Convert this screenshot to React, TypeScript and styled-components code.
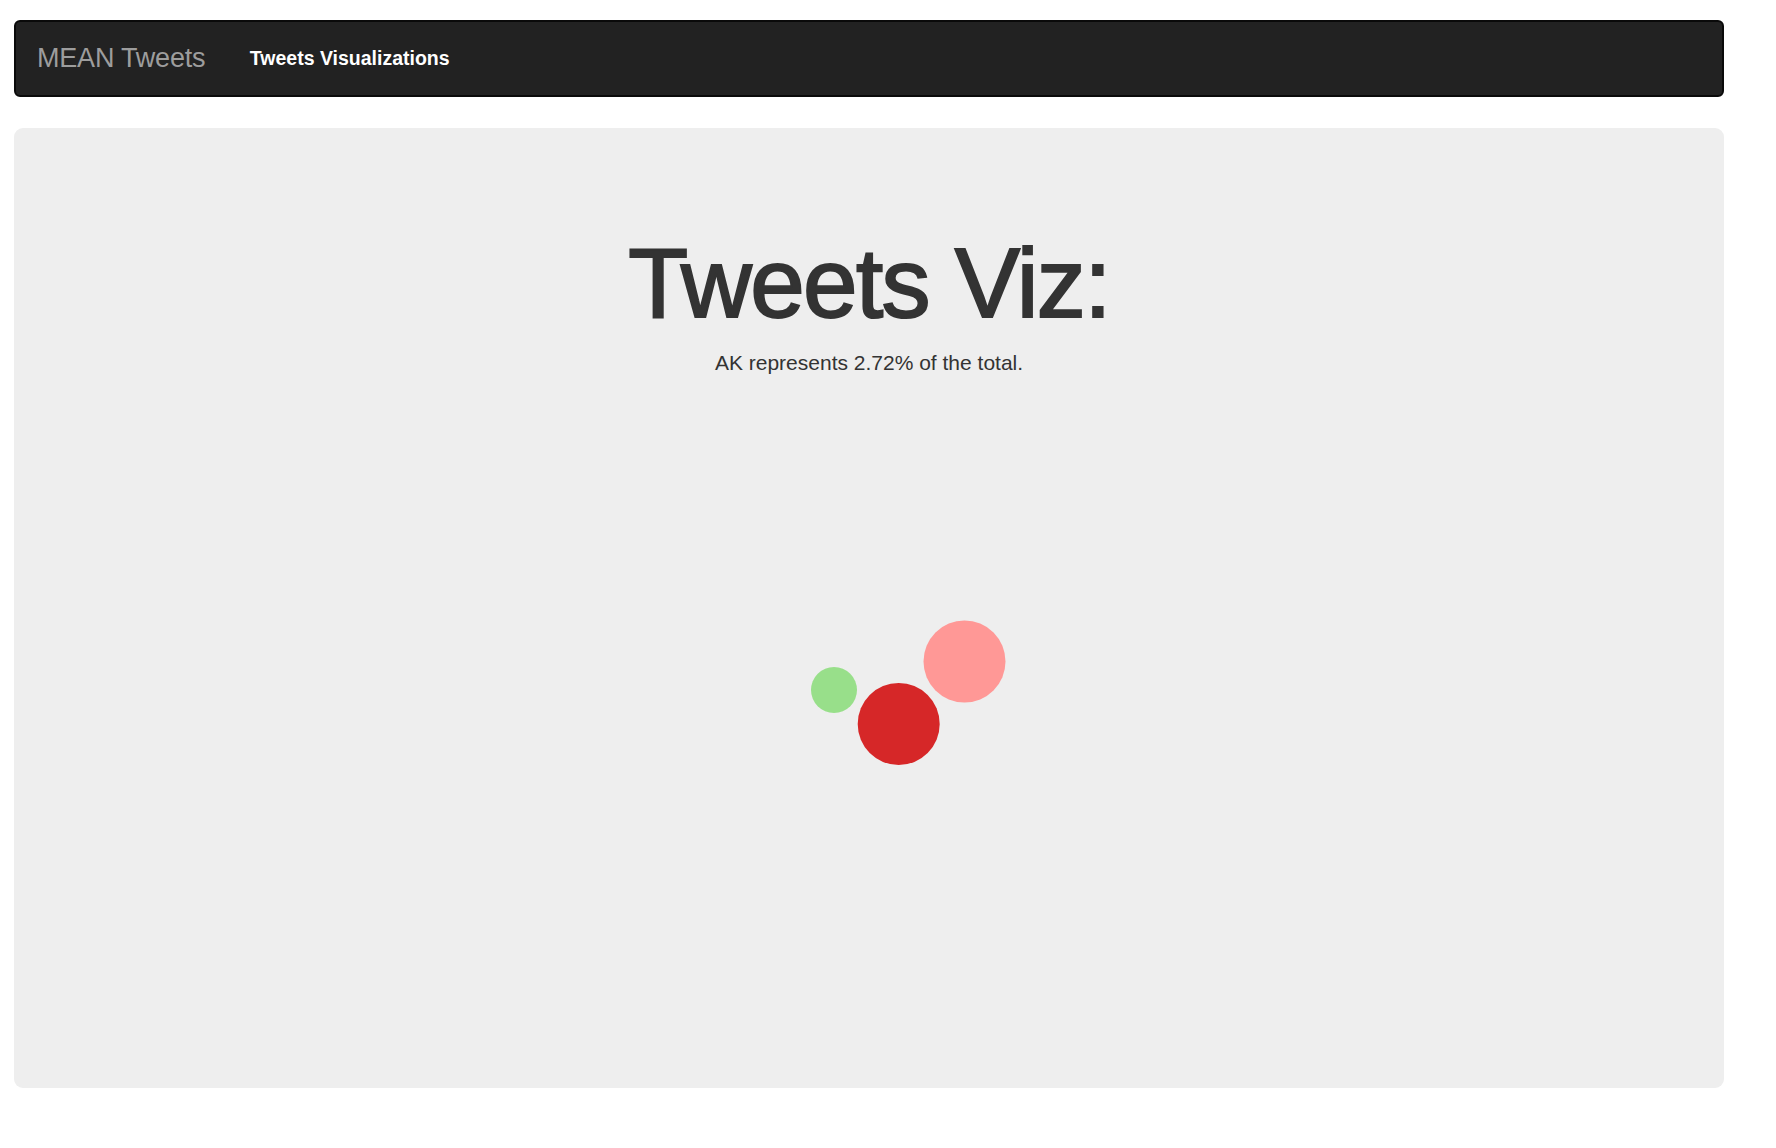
import React from "react";
import styled, { createGlobalStyle } from "styled-components";

const GlobalStyle = createGlobalStyle`
  html, body {
    margin: 0;
    padding: 0;
    background: #ffffff;
    font-family: "Liberation Sans", Arial, Helvetica, sans-serif;
    color: #333333;
  }
`;

const Page = styled.div`
  width: 1710px;
  margin-left: 14px;
  padding-top: 20px;
  box-sizing: border-box;
`;

const Navbar = styled.nav`
  display: flex;
  align-items: stretch;
  height: 77px;
  box-sizing: border-box;
  background: #222222;
  border: 2px solid #0a0a0a;
  border-radius: 6px;
  margin-bottom: 31px;
`;

const Brand = styled.a`
  display: flex;
  align-items: center;
  padding: 0 21px 0 21px;
  font-size: 27px;
  letter-spacing: -0.2px;
  color: #9d9d9d;
  text-decoration: none;
`;

const NavLink = styled.a<{ $active?: boolean }>`
  display: flex;
  align-items: center;
  padding: 0 22px 0 23.5px;
  font-size: 19.5px;
  font-weight: 700;
  color: ${(p) => (p.$active ? "#ffffff" : "#9d9d9d")};
  text-decoration: none;
`;

const Jumbotron = styled.section`
  background: #eeeeee;
  border-radius: 9px;
  padding: 101px 0 88px;
  box-sizing: border-box;
`;

const Header = styled.div`
  display: flex;
  flex-direction: column;
  align-items: center;
`;

const Title = styled.h1`
  margin: 0;
  font-size: 98px;
  line-height: 108px;
  font-weight: 400;
  letter-spacing: -1.6px;
  -webkit-text-stroke: 2px #333333;
  color: #333333;
`;

const Caption = styled.p`
  margin: 11px 0 0;
  font-size: 21px;
  line-height: 30px;
  color: #333333;
`;

const Chart = styled.svg`
  display: block;
  width: 100%;
  height: 600px;
  margin-top: 22px;
`;

const bubbles = [
  { state: "AK", cx: 820, cy: 290, r: 23, color: "#98df8a" },
  { state: "AL", cx: 884.7, cy: 324, r: 41, color: "#d62728" },
  { state: "AR", cx: 950.5, cy: 261.5, r: 41, color: "#ff9896" },
];

export default function App() {
  return (
    <>
      <GlobalStyle />
      <Page>
        <Navbar>
          <Brand href="#">MEAN Tweets</Brand>
          <NavLink href="#" $active>
            Tweets Visualizations
          </NavLink>
        </Navbar>
        <Jumbotron>
          <Header>
            <Title>Tweets Viz:</Title>
            <Caption>AK represents 2.72% of the total.</Caption>
          </Header>
          <Chart viewBox="0 0 1710 600">
            {bubbles.map((b) => (
              <circle key={b.state} cx={b.cx} cy={b.cy} r={b.r} fill={b.color} />
            ))}
          </Chart>
        </Jumbotron>
      </Page>
    </>
  );
}
